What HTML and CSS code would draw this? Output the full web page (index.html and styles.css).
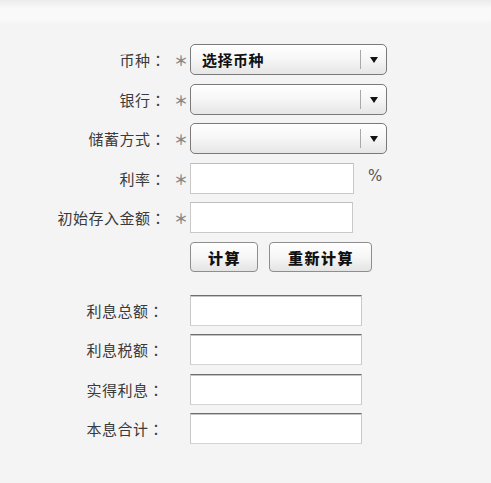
FILE: index.html
```html
<!DOCTYPE html>
<html lang="zh-CN">
<head>
<meta charset="utf-8">
<title>存款计算器</title>
<link rel="stylesheet" href="styles.css">
</head>
<body>
<div class="topbar"></div>
<div class="calc">
  <div class="form">
    <div class="label">币种<span class="colon" lang="ja">：</span></div><div class="star">＊</div>
    <div class="field"><div class="select"><span class="value">选择币种</span><span class="divider"></span><span class="arrow"><i></i></span></div></div>

    <div class="label">银行<span class="colon" lang="ja">：</span></div><div class="star">＊</div>
    <div class="field"><div class="select"><span class="value"></span><span class="divider"></span><span class="arrow"><i></i></span></div></div>

    <div class="label">储蓄方式<span class="colon" lang="ja">：</span></div><div class="star">＊</div>
    <div class="field"><div class="select"><span class="value"></span><span class="divider"></span><span class="arrow"><i></i></span></div></div>

    <div class="label">利率<span class="colon" lang="ja">：</span></div><div class="star">＊</div>
    <div class="field"><div class="input wide"></div><span class="unit">%</span></div>

    <div class="label">初始存入金额<span class="colon" lang="ja">：</span></div><div class="star">＊</div>
    <div class="field"><div class="input"></div></div>

    <div class="label"></div><div class="star"></div>
    <div class="field buttons"><button class="btn b1">计算</button><button class="btn b2">重新计算</button></div>
  </div>

  <div class="results">
    <div class="label">利息总额<span class="colon" lang="ja">：</span></div><div class="out"></div>
    <div class="label">利息税额<span class="colon" lang="ja">：</span></div><div class="out"></div>
    <div class="label">实得利息<span class="colon" lang="ja">：</span></div><div class="out"></div>
    <div class="label">本息合计<span class="colon" lang="ja">：</span></div><div class="out"></div>
  </div>
</div>
</body>
</html>
```

FILE: styles.css
```css
html, body {
  margin: 0;
  padding: 0;
}
body {
  background: #f4f4f4;
  font-family: "Noto Sans CJK SC", "Noto Sans", sans-serif;
  color: #333;
}
.topbar {
  height: 24px;
  background: linear-gradient(to bottom, #ececec 0px, #f3f3f3 5px, #f9f9f9 8px, #f9f9f9 20px, #f4f4f4 24px);
}
.calc {
  padding-top: 20px;
}
.form {
  display: grid;
  grid-template-columns: 166px 24px auto;
  grid-auto-rows: 31px;
  row-gap: 8.5px;
}
.label {
  font-size: 15px;
  letter-spacing: 0.5px;
  text-align: right;
  line-height: 31px;
  color: #3a3a3a;
  white-space: nowrap;
}
.colon {
  font-family: "Noto Sans CJK JP", "Noto Sans CJK SC", sans-serif;
}
.star {
  font-size: 14px;
  font-weight: bold;
  line-height: 31px;
  color: #888;
  text-align: center;
  padding-left: 6px;
  padding-top: 1px;
  box-sizing: border-box;
}
.field {
  display: flex;
  align-items: center;
  height: 31px;
}
.select {
  width: 197px;
  height: 31px;
  box-sizing: border-box;
  border: 1px solid #7a7a7a;
  border-radius: 5px;
  background: linear-gradient(to bottom, #ffffff 0%, #f7f7f7 45%, #e6e6e6 100%);
  display: flex;
  align-items: stretch;
}
.select .value {
  flex: 1;
  padding-left: 11px;
  font-size: 15px;
  font-weight: bold;
  color: #111;
  line-height: 29px;
  letter-spacing: 0.5px;
}
.select .divider {
  width: 1px;
  margin: 5px 0;
  background: #a8a8a8;
}
.select .arrow {
  width: 25px;
  display: flex;
  align-items: center;
  justify-content: center;
}
.select .arrow i {
  width: 0;
  height: 0;
  border-left: 4px solid transparent;
  border-right: 4px solid transparent;
  border-top: 6px solid #111;
  margin-top: 1px;
}
.input {
  width: 163px;
  height: 31px;
  box-sizing: border-box;
  background: #fff;
  border: 1px solid #c9c9c9;
  border-top-color: #bdbdbd;
}
.input.wide {
  width: 164px;
}
.unit {
  margin-left: 14px;
  margin-top: -5px;
  font-family: "DejaVu Sans", sans-serif;
  font-size: 15px;
  color: #555;
}
.buttons {
  gap: 11px;
  height: 31px;
}
.btn {
  height: 30px;
  box-sizing: border-box;
  border: 1px solid #8e8e8e;
  border-radius: 4px;
  background: linear-gradient(to bottom, #ffffff 0%, #f6f6f6 50%, #e4e4e4 100%);
  font-family: "Noto Sans CJK SC", sans-serif;
  font-size: 15px;
  font-weight: 900;
  color: #111;
  letter-spacing: 1.5px;
  padding: 0 0 0 1px;
  margin: 0;
}
.b1 { width: 68px; }
.b2 { width: 103px; }
.results {
  display: grid;
  grid-template-columns: 164px 172px;
  column-gap: 26px;
  grid-auto-rows: 31px;
  row-gap: 8.5px;
  margin-top: 22px;
}
.out {
  height: 31px;
  box-sizing: border-box;
  background: #fff;
  border: 1px solid #c8c8c8;
  border-top: 1px solid #6e6e6e;
  border-bottom-color: #d4d4d4;
  box-shadow: inset 0 1px 0 #c4c4c4;
}
```
